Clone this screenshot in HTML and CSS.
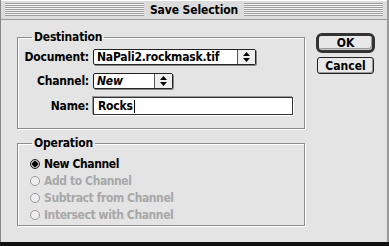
FILE: index.html
```html
<!DOCTYPE html>
<html lang="en">
<head>
  <meta charset="UTF-8">
  <title>Save Selection</title>
  <link rel="stylesheet" href="styles.css">
</head>
<body>
  <div class="window">
    <div class="titlebar">
      <span class="stripes"></span>
      <span class="title">Save Selection</span>
      <span class="stripes"></span>
    </div>

    <div class="content">
      <div class="groups">
        <fieldset class="group dest">
          <legend>Destination</legend>
          <div class="form">
            <label>Document:</label>
            <div class="popup doc">
              <span class="value">NaPali2.rockmask.tif</span>
              <span class="arrows">
                <svg width="7" height="10" viewBox="0 0 7 10"><path d="M3.5 0 L7 4 L0 4 Z M0 6 L7 6 L3.5 10 Z" fill="#000"/></svg>
              </span>
            </div>

            <label>Channel:</label>
            <div class="popup chan">
              <span class="value italic">New</span>
              <span class="arrows">
                <svg width="7" height="10" viewBox="0 0 7 10"><path d="M3.5 0 L7 4 L0 4 Z M0 6 L7 6 L3.5 10 Z" fill="#000"/></svg>
              </span>
            </div>

            <label>Name:</label>
            <div class="textfield">Rocks<span class="caret"></span></div>
          </div>
        </fieldset>

        <fieldset class="group oper">
          <legend>Operation</legend>
          <div class="radios">
            <div class="radio on"><span class="dot"></span>New Channel</div>
            <div class="radio off"><span class="dot"></span>Add to Channel</div>
            <div class="radio off"><span class="dot"></span>Subtract from Channel</div>
            <div class="radio off"><span class="dot"></span>Intersect with Channel</div>
          </div>
        </fieldset>
      </div>

      <div class="buttons">
        <div class="default-ring"><button class="btn">OK</button></div>
        <button class="btn cancel">Cancel</button>
      </div>
    </div>
  </div>
</body>
</html>
```

FILE: styles.css
```css
body {
  margin: 0;
  background: #111;
  font-family: "DejaVu Sans Condensed", "DejaVu Sans", sans-serif;
  font-stretch: condensed;
  font-size: 11px;
  font-weight: bold;
  letter-spacing: -0.2px;
  color: #000;
}

.window {
  width: 389px;
  height: 242px;
  background: #e4e4e4;
  border-left: 1px solid #888;
  border-right: 2px solid #999;
  box-sizing: border-box;
  overflow: hidden;
}

.titlebar {
  height: 19px;
  display: flex;
  align-items: center;
  gap: 6px;
  padding: 0 4px;
  background: #dcdcdc;
  border-bottom: 1px solid #9a9a9a;
  box-shadow: inset 0 1px 0 #fff;
}

.stripes {
  flex: 1;
  height: 13px;
  background: repeating-linear-gradient(to bottom, #9c9c9c 0, #9c9c9c 1px, #f4f4f4 1px, #f4f4f4 2px);
}

.title {
  font-size: 12px;
  letter-spacing: -0.1px;
}

.content {
  display: flex;
  padding: 10px 0 0 16px;
}

.groups {
  width: 288px;
}

.group {
  margin: 0;
  padding: 0;
  border: 1px solid #8c8c8c;
  box-shadow: 1px 1px 0 #fff, inset 1px 1px 0 #fff;
  min-width: 0;
}

.group legend {
  margin-left: 14px;
  padding: 0 2px;
  font-size: 12px;
  line-height: 14px;
}

.dest {
  height: 99px;
  box-sizing: border-box;
}

.form {
  display: grid;
  grid-template-columns: 71px auto;
  column-gap: 4px;
  row-gap: 8px;
  align-items: center;
  padding-top: 5px;
}

.form label {
  text-align: right;
  font-size: 12px;
}

.popup {
  display: flex;
  height: 16px;
  box-sizing: border-box;
  background: #fff;
  border: 1px solid #222;
  border-radius: 2px;
  box-shadow: 1px 1px 0 #888;
}

.popup.doc {
  width: 163px;
}

.popup.chan {
  width: 80px;
}

.popup .value {
  flex: 1;
  padding-left: 3px;
  font-size: 12px;
  line-height: 14px;
}

.italic {
  font-style: italic;
}

.arrows {
  width: 17px;
  border-left: 1px solid #555;
  display: flex;
  align-items: center;
  justify-content: center;
  background: #eee;
}

.textfield {
  width: 200px;
  height: 18px;
  box-sizing: border-box;
  background: #fff;
  border: 1px solid #333;
  box-shadow: -1px -1px 0 #999, 1px 1px 0 #fff;
  padding-left: 4px;
  font-size: 12px;
  line-height: 16px;
  display: flex;
  align-items: center;
}

.caret {
  display: inline-block;
  width: 1px;
  height: 13px;
  background: #000;
  margin-left: 1px;
}

.oper {
  margin-top: 7px;
  height: 90px;
  box-sizing: border-box;
}

.radios {
  display: flex;
  flex-direction: column;
  gap: 3px;
  padding: 7px 0 0 12px;
}

.radio {
  display: flex;
  align-items: center;
  gap: 4px;
  height: 14px;
  font-size: 12px;
  letter-spacing: -0.4px;
}

.radio .dot {
  width: 10px;
  height: 10px;
  border-radius: 50%;
  box-sizing: border-box;
  border: 1px solid #999;
  background: #eee;
}

.radio.on .dot {
  border: 1px solid #222;
  background: radial-gradient(circle, #000 0, #000 2.5px, #bbb 3px);
}

.radio.off {
  color: #a8a8a8;
}

.buttons {
  display: flex;
  flex-direction: column;
  align-items: center;
  gap: 4px;
  margin-left: 11px;
  padding-top: 3px;
}

.default-ring {
  border: 3px solid #333;
  border-radius: 6px;
  padding: 0;
  background: #ccc;
}

.btn {
  width: 57px;
  height: 17px;
  padding: 0;
  font-family: inherit;
  font-stretch: condensed;
  font-weight: bold;
  font-size: 12px;
  line-height: 14px;
  background: #e8e8e8;
  border: 1px solid #222;
  border-radius: 3px;
  box-shadow: inset -1px -1px 0 #999;
}

.default-ring .btn {
  width: 53px;
  height: 13px;
  border: none;
  border-radius: 3px;
}
```
